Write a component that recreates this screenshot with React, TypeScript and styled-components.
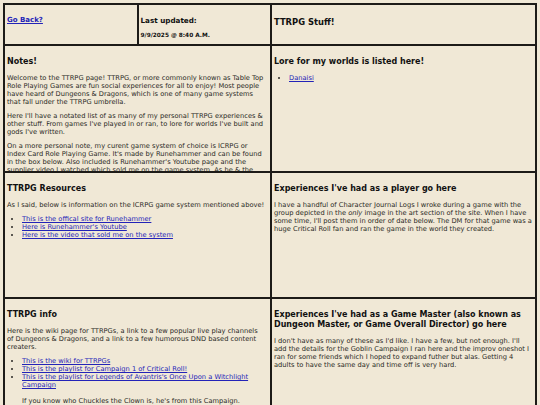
import React from 'react'
import styled, { createGlobalStyle } from 'styled-components'

const GlobalStyle = createGlobalStyle`
  html, body {
    margin: 0;
    padding: 0;
    background: #f0e8d6;
    font-family: "DejaVu Sans", Verdana, sans-serif;
    color: #2a2825;
  }
`

const Board = styled.div`
  margin: 3px 3px 0 3px;
  padding: 2px;
  background: #1d1b18;
  display: grid;
  grid-template-columns: 1fr 1fr 2fr;
  grid-template-rows: 39px 125px 124px 125px;
  gap: 2px;
`

const Cell = styled.div<{ $span?: number; $padRight?: number }>`
  background: #f0e8d6;
  padding: 2px ${(p) => p.$padRight ?? 2}px 2px 2px;
  overflow: hidden;
  grid-column: span ${(p) => p.$span ?? 1};
`

const TopCell = styled(Cell)`
  padding: 9px 2px 0 2px;
`

const BackLink = styled.a`
  font-size: 7px;
  font-weight: bold;
  color: #2323b8;
  text-decoration: underline;
  display: block;
  margin-top: 2px;
`

const Updated = styled.div`
  font-size: 7.2px;
  font-weight: bold;
  color: #111;
  margin-top: 2px;
`

const UpdatedDate = styled.div`
  font-size: 5.8px;
  font-weight: bold;
  color: #111;
  margin-top: 7px;
`

const Title = styled.h1`
  font-size: 8.4px;
  font-weight: bold;
  color: #111;
  margin: 3px 0 0 0;
`

const Heading = styled.h3`
  font-size: 8px;
  line-height: 10px;
  font-weight: bold;
  color: #111;
  margin: 9px 0 7px 0;
`

const Para = styled.p`
  font-size: 6.7px;
  line-height: 8px;
  margin: 0 0 6px 0;

  em {
    line-height: 1;
  }
`

const List = styled.ul`
  font-size: 6.7px;
  line-height: 8px;
  margin: 6px 0;
  padding-left: 15px;
`

const Item = styled.li`
  p {
    margin: 8px 0 0 0;
  }
`

const Link = styled.a`
  color: #2323b8;
  text-decoration: underline;
`

export default function App() {
  return (
    <>
      <GlobalStyle />
      <Board>
        <TopCell>
          <BackLink href="#">Go Back?</BackLink>
        </TopCell>
        <TopCell>
          <Updated>Last updated:</Updated>
          <UpdatedDate>9/9/2025 @ 8:40 A.M.</UpdatedDate>
        </TopCell>
        <TopCell>
          <Title>TTRPG Stuff!</Title>
        </TopCell>

        <Cell $span={2} $padRight={4.5}>
          <Heading>Notes!</Heading>
          <Para>
            Welcome to the TTRPG page! TTRPG, or more commonly known as Table Top Role Playing Games are
            fun social experiences for all to enjoy! Most people have heard of Dungeons &amp; Dragons, which
            is one of many game systems that fall under the TTRPG umbrella.
          </Para>
          <Para>
            Here I'll have a notated list of as many of my personal TTRPG experiences &amp; other stuff.
            From games I've played in or ran, to lore for worlds I've built and gods I've written.
          </Para>
          <Para>
            On a more personal note, my curent game system of choice is ICRPG or Index Card Role Playing
            Game. It's made by Runehammer and can be found in the box below. Also included is Runehammer's
            Youtube page and the supplier video I watched which sold me on the game system. As he &amp; the
            community says, have fun and roll well.
          </Para>
        </Cell>
        <Cell>
          <Heading>Lore for my worlds is listed here!</Heading>
          <List>
            <Item>
              <Link href="#">Danaisi</Link>
            </Item>
          </List>
        </Cell>

        <Cell $span={2} $padRight={4.5}>
          <Heading>TTRPG Resources</Heading>
          <Para>As I said, below is information on the ICRPG game system mentioned above!</Para>
          <List>
            <Item>
              <Link href="#">This is the offical site for Runehammer</Link>
            </Item>
            <Item>
              <Link href="#">Here is Runehammer's Youtube</Link>
            </Item>
            <Item>
              <Link href="#">Here is the video that sold me on the system</Link>
            </Item>
          </List>
        </Cell>
        <Cell>
          <Heading>Experiences I've had as a player go here</Heading>
          <Para>
            I have a handful of Character Journal Logs I wroke during a game with the group depicted in the{' '}
            <em>only</em> image in the art section of the site. When I have some time, I'll post them in
            order of date below. The DM for that game was a huge Critical Roll fan and ran the game in the
            world they created.
          </Para>
        </Cell>

        <Cell $span={2} $padRight={4.5}>
          <Heading>TTRPG info</Heading>
          <Para>
            Here is the wiki page for TTRPGs, a link to a few popular live play channels of Dungeons &amp;
            Dragons, and a link to a few humorous DND based content creaters.
          </Para>
          <List>
            <Item>
              <Link href="#">This is the wiki for TTRPGs</Link>
            </Item>
            <Item>
              <Link href="#">This is the playlist for Campaign 1 of Critical Roll!</Link>
            </Item>
            <Item>
              <Link href="#">This is the playlist for Legends of Avantris's Once Upon a Witchlight Campaign</Link>
              <p>If you know who Chuckles the Clown is, he's from this Campaign.</p>
            </Item>
          </List>
        </Cell>
        <Cell>
          <Heading>
            Experiences I've had as a Game Master (also known as Dungeon Master, or Game Overall Director) go
            here
          </Heading>
          <Para>
            I don't have as many of these as I'd like. I have a few, but not enough. I'll add the details
            for the Goblin Campaign I ran here and the improv oneshot I ran for some friends which I hoped
            to expand futher but alas. Getting 4 adults to have the same day and time off is very hard.
          </Para>
        </Cell>
      </Board>
    </>
  )
}
